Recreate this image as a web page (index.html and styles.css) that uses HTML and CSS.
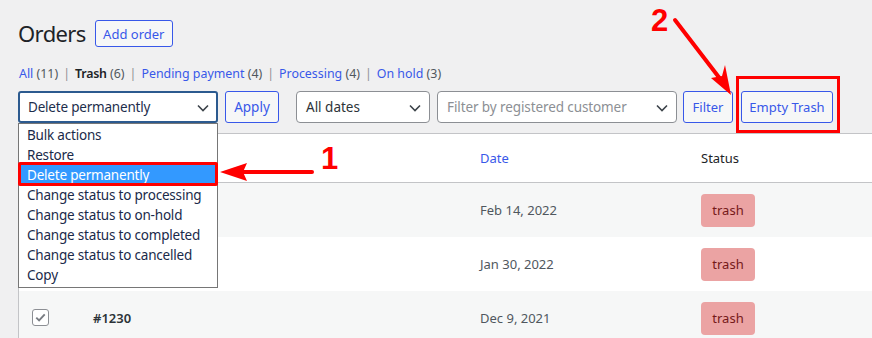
FILE: index.html
```html
<!DOCTYPE html>
<html>
<head>
<meta charset="utf-8">
<link rel="stylesheet" href="styles.css">
</head>
<body>
<div class="page">
  <div class="head">
    <h1 class="title">Orders</h1>
    <a class="btn add">Add order</a>
  </div>
  <ul class="subsub">
    <li><a>All</a> <span class="count">(11)</span></li>
    <li class="sep">|</li>
    <li><b>Trash</b> <span class="count">(6)</span></li>
    <li class="sep">|</li>
    <li><a>Pending payment</a> <span class="count">(4)</span></li>
    <li class="sep">|</li>
    <li><a>Processing</a> <span class="count">(4)</span></li>
    <li class="sep">|</li>
    <li><a>On hold</a> <span class="count">(3)</span></li>
  </ul>
  <div class="toolbar">
    <div class="select bulk focused">Delete permanently<svg class="chev" viewBox="0 0 12 8"><path d="M1 1.5l5 5 5-5" fill="none" stroke="#3c434a" stroke-width="1.6"/></svg></div>
    <span class="btn apply">Apply</span>
    <div class="select dates">All dates<svg class="chev" viewBox="0 0 12 8"><path d="M1 1.5l5 5 5-5" fill="none" stroke="#3c434a" stroke-width="1.6"/></svg></div>
    <div class="select cust"><span class="ph">Filter by registered customer</span><svg class="chev" viewBox="0 0 12 8"><path d="M1 1.5l5 5 5-5" fill="none" stroke="#3c434a" stroke-width="1.6"/></svg></div>
    <span class="btn filter">Filter</span>
    <span class="btn empty">Empty Trash</span>
  </div>
  <table class="orders">
    <thead>
      <tr><th class="c-cb"></th><th class="c-order"></th><th class="c-date"><a>Date</a></th><th class="c-status">Status</th></tr>
    </thead>
    <tbody>
      <tr class="alt"><td class="c-cb"></td><td class="c-order"></td><td class="c-date">Feb 14, 2022</td><td class="c-status"><span class="badge">trash</span></td></tr>
      <tr><td class="c-cb"></td><td class="c-order"></td><td class="c-date">Jan 30, 2022</td><td class="c-status"><span class="badge">trash</span></td></tr>
      <tr class="alt"><td class="c-cb"><span class="cb"><svg viewBox="0 0 16 16"><path d="M3.5 8.2l3 3 6-6.5" fill="none" stroke="#787c82" stroke-width="2"/></svg></span></td><td class="c-order"><b>#1230</b></td><td class="c-date">Dec 9, 2021</td><td class="c-status"><span class="badge">trash</span></td></tr>
    </tbody>
  </table>

  <ul class="dropdown">
    <li>Bulk actions</li>
    <li>Restore</li>
    <li class="sel">Delete permanently</li>
    <li>Change status to processing</li>
    <li>Change status to on-hold</li>
    <li>Change status to completed</li>
    <li>Change status to cancelled</li>
    <li>Copy</li>
  </ul>

  <div class="hl hl-item"></div>
  <div class="hl hl-btn"></div>
  <svg class="arrow arrow1" width="120" height="30" viewBox="0 0 120 30">
    <path d="M93 15H20" stroke="#f00" stroke-width="4" stroke-linecap="round"/>
    <path d="M1 15L28 6L24 15L28 24Z" fill="#f00"/>
  </svg>
  <span class="num num1">1</span>
  <svg class="arrow arrow2" width="70" height="90" viewBox="0 0 70 90">
    <path d="M4 4L50 64" stroke="#f00" stroke-width="4" stroke-linecap="round"/>
    <path d="M60 79L40 62L51 60L54 49Z" fill="#f00"/>
  </svg>
  <span class="num num2">2</span>
</div>
</body>
</html>
```
FILE: styles.css
```css
html, body {
  margin: 0;
  padding: 0;
}
body {
  background: #f0f0f1;
  font-family: "Noto Sans", "Open Sans", sans-serif;
  color: #1d2327;
  width: 872px;
  height: 338px;
  overflow: hidden;
}
.page {
  position: relative;
  padding: 20px 0 0 18px;
}
.head {
  display: flex;
  align-items: center;
  gap: 9px;
  height: 27px;
}
.title {
  margin: 0;
  font-size: 22px;
  font-weight: 400;
  line-height: 27px;
  letter-spacing: -0.6px;
  color: #1d2327;
}
.btn {
  display: inline-flex;
  align-items: center;
  justify-content: center;
  box-sizing: border-box;
  border: 1px solid #3858e9;
  border-radius: 3px;
  color: #3858e9;
  background: #f6f7f7;
  font-size: 13px;
}
.add {
  width: 78px;
  height: 27px;
  background: #f6f7f7;
}
.subsub {
  list-style: none;
  margin: 0;
  padding: 0 0 0 1px;
  display: flex;
  align-items: center;
  font-size: 12.4px;
  color: #50575e;
  height: 20px;
  margin-top: 16px;
}
.subsub li { white-space: pre; }
.subsub a { color: #3858e9; }
.subsub b { color: #1d2327; font-weight: 600; letter-spacing: -0.2px; }
.subsub .sep { padding: 0 5px; color: #8c8f94; }
.toolbar {
  display: flex;
  align-items: center;
  height: 32px;
  margin-top: 8px;
}
.select {
  position: relative;
  box-sizing: border-box;
  height: 32px;
  background: #fff;
  border: 1px solid #8c8f94;
  border-radius: 4px;
  font-size: 13.5px;
  padding-left: 9px;
  display: flex;
  align-items: center;
  color: #2c3338;
}
.select .chev {
  position: absolute;
  right: 8px;
  top: 12px;
  width: 12px;
  height: 8px;
}
.bulk { width: 200px; letter-spacing: -0.2px; }
.focused {
  border: 2px solid #2c5a8f;
  padding-left: 8px;
  color: #1d2e4c;
  border-radius: 3px;
}
.focused .chev { right: 7px; top: 11px; }
.apply { width: 54px; height: 32px; margin-left: 7px; font-size: 13.5px; }
.dates { width: 134px; margin-left: 17px; }
.cust { width: 240px; margin-left: 7px; }
.cust .ph { color: #8c8f94; letter-spacing: -0.1px; }
.filter { width: 50px; height: 32px; margin-left: 6px; font-size: 13px; }
.empty { width: 92px; height: 32px; margin-left: 8px; font-size: 13px; }

.orders {
  margin-top: 10px;
  width: 900px;
  border-collapse: collapse;
  border-left: 1px solid #c3c4c7;
  border-top: 1px solid #c3c4c7;
  background: #fff;
  font-size: 13px;
  table-layout: fixed;
}
.orders th {
  height: 48px;
  text-align: left;
  font-weight: 400;
  color: #1d2327;
  border-bottom: 1px solid #c3c4c7;
  padding: 0;
}
.orders th a { color: #3858e9; }
.orders td {
  height: 54px;
  padding: 0;
  color: #50575e;
}
.orders tr.alt td { background: #f6f7f7; }
.orders td.c-cb, .orders th.c-cb { width: 74px; }
.orders .c-order { width: 387px; }
.orders .c-date { width: 221px; }
.orders td.c-order b { color: #2c3338; font-weight: 600; }
.cb {
  display: inline-block;
  box-sizing: border-box;
  width: 17px;
  height: 17px;
  border: 1px solid #8c8f94;
  border-radius: 3px;
  background: #fff;
  margin-left: 13px;
  vertical-align: middle;
  position: relative;
  top: -2px;
}
.cb svg { display: block; width: 15px; height: 15px; }
.badge {
  display: inline-flex;
  align-items: center;
  justify-content: center;
  width: 54px;
  height: 33px;
  background: #eba3a3;
  color: #761919;
  border-radius: 4px;
  font-size: 13px;
}

.dropdown {
  position: absolute;
  left: 18px;
  top: 123px;
  width: 200px;
  box-sizing: border-box;
  margin: 0;
  padding: 1px 0 2px;
  list-style: none;
  background: #fff;
  border: 1px solid #767676;
  font-size: 13.5px;
  letter-spacing: -0.2px;
  color: #1a2a4a;
}
.dropdown li {
  height: 20px;
  line-height: 20px;
  padding-left: 8px;
  white-space: nowrap;
}
.dropdown li.sel {
  background: #3399ff;
  color: #fff;
}
.hl {
  position: absolute;
  border: 3px solid #f00;
  box-sizing: border-box;
}
.hl-item { left: 18px; top: 162px; width: 200px; height: 24px; border-radius: 2px; }
.hl-btn { left: 736px; top: 76px; width: 104px; height: 57px; }
.arrow { position: absolute; }
.arrow1 { left: 219px; top: 157px; }
.arrow2 { left: 671px; top: 16px; }
.num {
  position: absolute;
  color: #f00;
  font-family: "Liberation Sans", Arial, sans-serif;
  font-weight: 700;
  font-size: 31px;
  line-height: 1;
}
.num1 { left: 321px; top: 143px; }
.num2 { left: 651px; top: 5px; }
```
